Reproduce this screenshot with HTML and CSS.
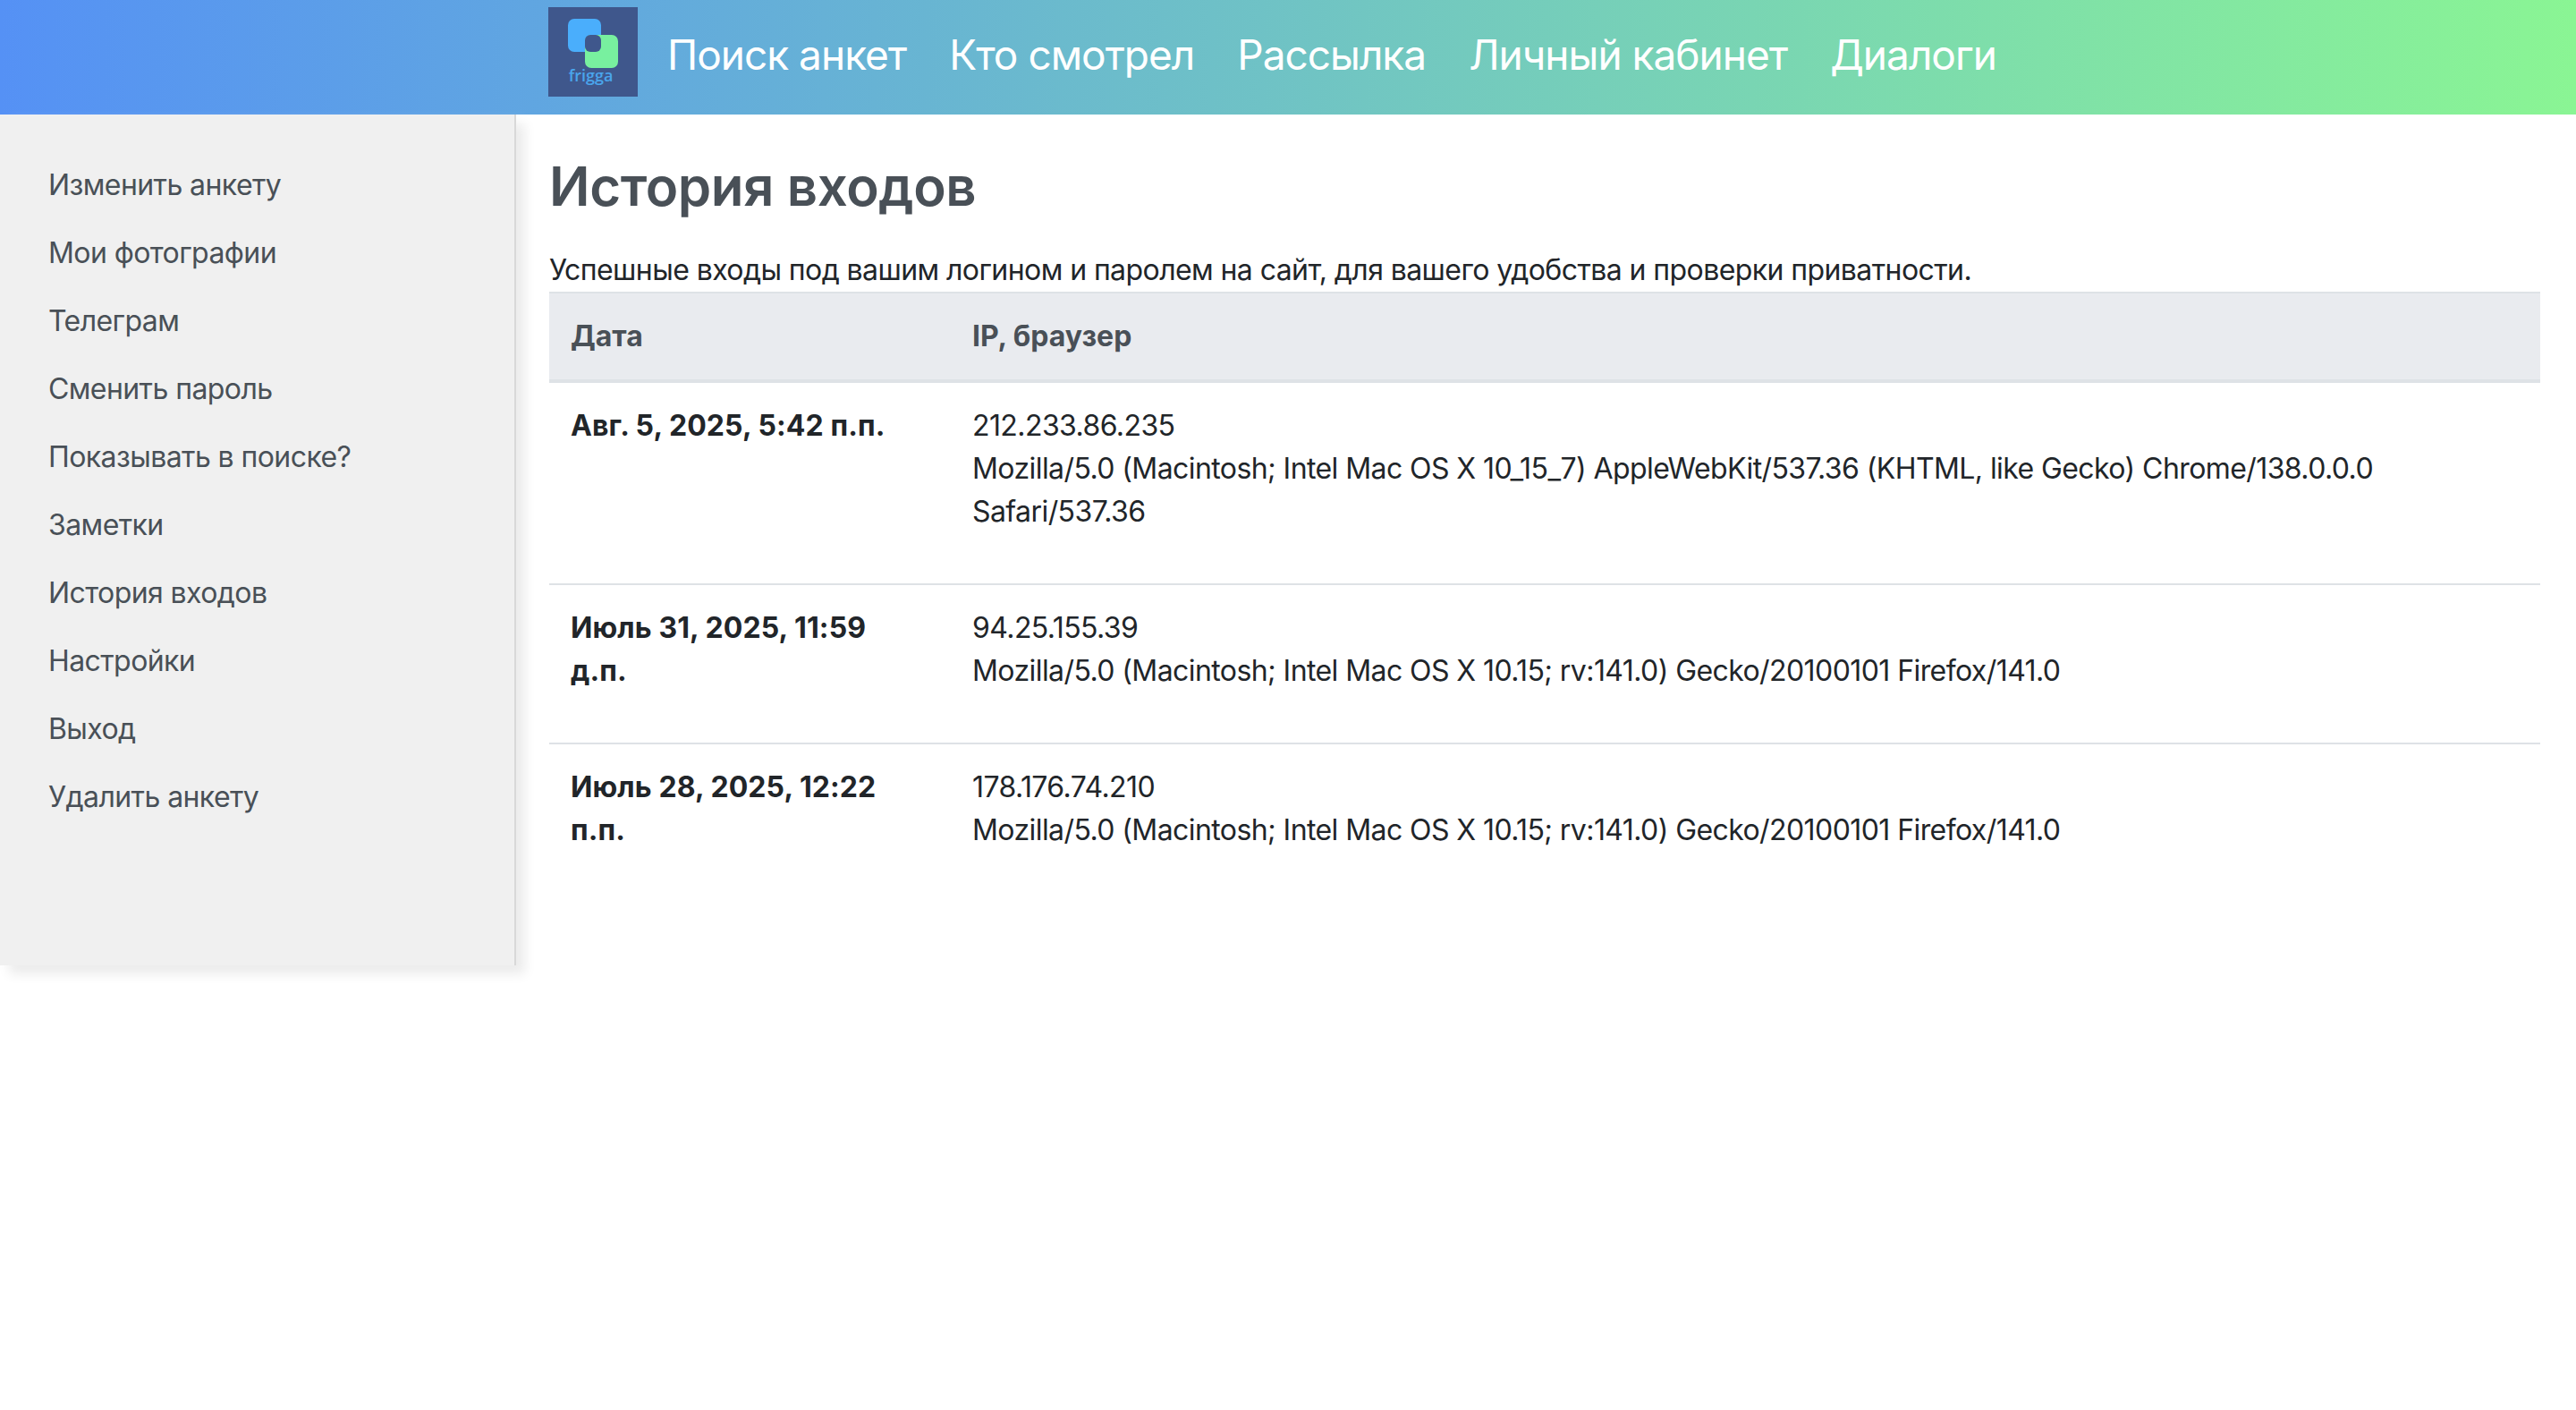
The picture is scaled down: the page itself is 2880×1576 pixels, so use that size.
FILE: index.html
```html
<!DOCTYPE html>
<html lang="ru">
<head>
<meta charset="utf-8">
<title>История входов</title>
<link rel="stylesheet" href="styles.css">
</head>
<body>
<header class="topbar">
  <a class="logo" href="#">
    <svg width="100" height="100" viewBox="0 0 100 100">
      <rect width="100" height="100" fill="#3f578c"/>
      <rect x="22" y="13" width="37" height="37" rx="7" fill="#4aaefc"/>
      <rect x="41" y="31" width="37" height="37" rx="7" fill="#78f09f"/>
      <rect x="41" y="31" width="18" height="19" rx="6" fill="#3f578c"/>
      <text x="47.5" y="83" text-anchor="middle" class="logo-text">frigga</text>
    </svg>
  </a>
  <nav class="mainnav">
    <a href="#">Поиск анкет</a>
    <a href="#">Кто смотрел</a>
    <a href="#">Рассылка</a>
    <a href="#">Личный кабинет</a>
    <a href="#">Диалоги</a>
  </nav>
</header>
<div class="page">
  <aside class="sidebar">
    <a href="#">Изменить анкету</a>
    <a href="#">Мои фотографии</a>
    <a href="#">Телеграм</a>
    <a href="#">Сменить пароль</a>
    <a href="#">Показывать в поиске?</a>
    <a href="#">Заметки</a>
    <a href="#">История входов</a>
    <a href="#">Настройки</a>
    <a href="#">Выход</a>
    <a href="#">Удалить анкету</a>
  </aside>
  <main class="content">
    <h1>История входов</h1>
    <p class="lead">Успешные входы под вашим логином и паролем на сайт, для вашего удобства и проверки приватности.</p>
    <table>
      <thead>
        <tr><th class="col-date">Дата</th><th>IP, браузер</th></tr>
      </thead>
      <tbody>
        <tr>
          <td class="date">Авг. 5, 2025, 5:42 п.п.</td>
          <td><p>212.233.86.235<br>Mozilla/5.0 (Macintosh; Intel Mac OS X 10_15_7) AppleWebKit/537.36 (KHTML, like Gecko) Chrome/138.0.0.0 Safari/537.36</p></td>
        </tr>
        <tr>
          <td class="date">Июль 31, 2025, 11:59 д.п.</td>
          <td><p>94.25.155.39<br>Mozilla/5.0 (Macintosh; Intel Mac OS X 10.15; rv:141.0) Gecko/20100101 Firefox/141.0</p></td>
        </tr>
        <tr>
          <td class="date">Июль 28, 2025, 12:22 п.п.</td>
          <td><p>178.176.74.210<br>Mozilla/5.0 (Macintosh; Intel Mac OS X 10.15; rv:141.0) Gecko/20100101 Firefox/141.0</p></td>
        </tr>
      </tbody>
    </table>
  </main>
</div>
</body>
</html>
```
FILE: styles.css
```css
* { box-sizing: border-box; }
html, body { margin: 0; padding: 0; }
body {
  min-height: 1576px;
  background: #fff;
  color: #212529;
  font-family: Inter, "Liberation Sans", sans-serif;
  font-size: 32px;
  line-height: 48px;
  letter-spacing: -0.58px;
}
a { text-decoration: none; }

.topbar {
  display: flex;
  align-items: flex-start;
  height: 128px;
  padding: 8px 0 0 613px;
  background: linear-gradient(90deg, #5591f5 0%, #8af594 100%);
}
.logo { display: block; width: 100px; height: 100px; }
.logo svg { display: block; }
.logo-text {
  font-family: "Open Sans", sans-serif;
  font-size: 18px;
  font-weight: 600;
  letter-spacing: 0;
  fill: #4aa5ec;
}
.mainnav { display: flex; gap: 48px; margin-left: 33px; }
.mainnav a {
  color: #fff;
  font-size: 46px;
  line-height: 106px;
  letter-spacing: -1px;
  white-space: nowrap;
}

.page { display: flex; align-items: flex-start; }
.sidebar {
  display: flex;
  flex-direction: column;
  gap: 28px;
  flex: none;
  width: 577px;
  height: 951px;
  padding: 55px 0 0 54px;
  background: #f0f0f0;
  border-right: 2px solid #d8d8d8;
  box-shadow: 10px 10px 12px #ececec;
}
.sidebar a { color: #495057; }

.content { flex: 1; padding: 0 40px 0 37px; }
h1 {
  margin: 44px 0 34px;
  color: #495057;
  font-size: 60px;
  font-weight: 600;
  line-height: 72px;
  letter-spacing: -0.4px;
}
.lead { margin: 0; }
table {
  width: 100%;
  border-collapse: collapse;
  table-layout: fixed;
}
th, td {
  padding: 24px;
  text-align: left;
  vertical-align: top;
  border-top: 2px solid #dee2e6;
}
thead th {
  color: #495057;
  background: #e9ebef;
  font-weight: 700;
  letter-spacing: 0;
  border-bottom: 4px solid #dee2e6;
}
.col-date { width: 449px; }
.date { font-weight: 700; letter-spacing: 0.1px; padding-right: 30px; }
td p { margin: 0 0 32px; }
```
